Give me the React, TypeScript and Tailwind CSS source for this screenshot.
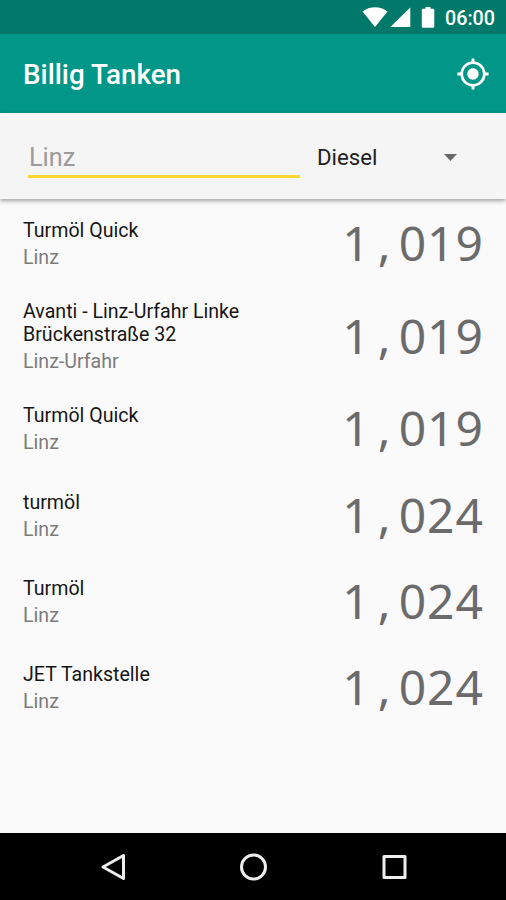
import React from "react";
import { MdMyLocation } from "react-icons/md";

type Station = {
  name: string;
  city: string;
  price: string;
};

const stations: Station[] = [
  { name: "Turmöl Quick", city: "Linz", price: "1,019" },
  { name: "Avanti - Linz-Urfahr Linke Brückenstraße 32", city: "Linz-Urfahr", price: "1,019" },
  { name: "Turmöl Quick", city: "Linz", price: "1,019" },
  { name: "turmöl", city: "Linz", price: "1,024" },
  { name: "Turmöl", city: "Linz", price: "1,024" },
  { name: "JET Tankstelle", city: "Linz", price: "1,024" },
];

function StatusBar() {
  return (
    <div className="flex h-[34px] shrink-0 items-center justify-end bg-[#00796b] pr-[11px] text-white">
      <svg width="84" height="34" viewBox="0 0 84 34" fill="currentColor">
        <path d="M1.500 11.500C8.500 5.700 19.500 5.700 26.500 11.500L14 27Z" />
        <path d="M49.300 7.500V27H29.300Z" />
        <path d="M64.500 7H69.500V8.800H72Q73.300 8.800 73.300 10V26.500Q73.300 27.700 72 27.700H62Q60.800 27.700 60.800 26.500V10Q60.800 8.800 62 8.800H64.500Z" />
      </svg>
      <span className="mt-[3px] w-[50px] text-[19.700px] leading-6 font-medium whitespace-nowrap">06:00</span>
    </div>
  );
}

function AppBar() {
  return (
    <div className="flex h-[79px] shrink-0 items-center justify-between bg-[#009688] pr-4 pl-[23px] text-white">
      <h1 className="pt-[3px] text-[27.800px] leading-8 font-medium">Billig Tanken</h1>
      <MdMyLocation size={34} />
    </div>
  );
}

function Filter() {
  return (
    <div className="z-10 flex h-[86px] shrink-0 items-start bg-[#f5f5f5] pt-[27px] pl-7 shadow-[0_2px_4px_rgba(0,0,0,0.35)]">
      <div className="h-[38px] w-[272px] border-b-[3px] border-[#fdd835] pt-px pl-px text-[25.300px] leading-[34px] text-[#9b9b9b]">
        Linz
      </div>
      <button className="ml-[17px] flex w-[140px] items-center justify-between text-[22.200px] leading-[34px] text-[#212121]">
        Diesel
        <svg width="13" height="7" viewBox="0 0 13 7" fill="#686868">
          <path d="M0 0H13L6.500 7Z" />
        </svg>
      </button>
    </div>
  );
}

function Price({ value }: { value: string }) {
  const [euro, cents] = value.split(",");

  return (
    <div className="flex h-[60px] items-center pb-0.5 font-['Noto_Sans','Open_Sans',sans-serif] text-[48px] leading-[58px] tracking-[1px] text-[#6b6b6b]">
      <span>{euro}</span>
      <span className="w-[28px] text-center">,</span>
      <span>{cents}</span>
    </div>
  );
}

function StationRow({ name, city, price }: Station) {
  return (
    <li className="flex items-center justify-between py-[13.100px] pr-[22px] pl-[23px]">
      <div className="w-[240px] text-[19.600px] leading-[23px]">
        <p className="text-[#161616]">{name}</p>
        <p className="mt-1 text-[#7c7c7c]">{city}</p>
      </div>
      <Price value={price} />
    </li>
  );
}

function NavigationBar() {
  return (
    <div className="flex h-[67px] shrink-0 items-center justify-center bg-black">
      <svg width="310" height="34" viewBox="0 0 310 34" fill="none" stroke="#eeeeee" strokeWidth="3" strokeLinejoin="round">
        <path d="M25.500 5.500V28.500L5 17Z" />
        <circle cx="155.500" cy="17" r="12" />
        <rect x="286" y="6.500" width="21" height="21" />
      </svg>
    </div>
  );
}

export default function App() {
  return (
    <div className="flex h-[900px] w-[506px] flex-col overflow-hidden bg-[#fafafa] font-['Roboto',sans-serif]">
      <StatusBar />
      <AppBar />
      <Filter />
      <ul className="flex-1 pt-[2px]">
        {stations.map((station, index) => (
          <StationRow key={index} {...station} />
        ))}
      </ul>
      <NavigationBar />
    </div>
  );
}
